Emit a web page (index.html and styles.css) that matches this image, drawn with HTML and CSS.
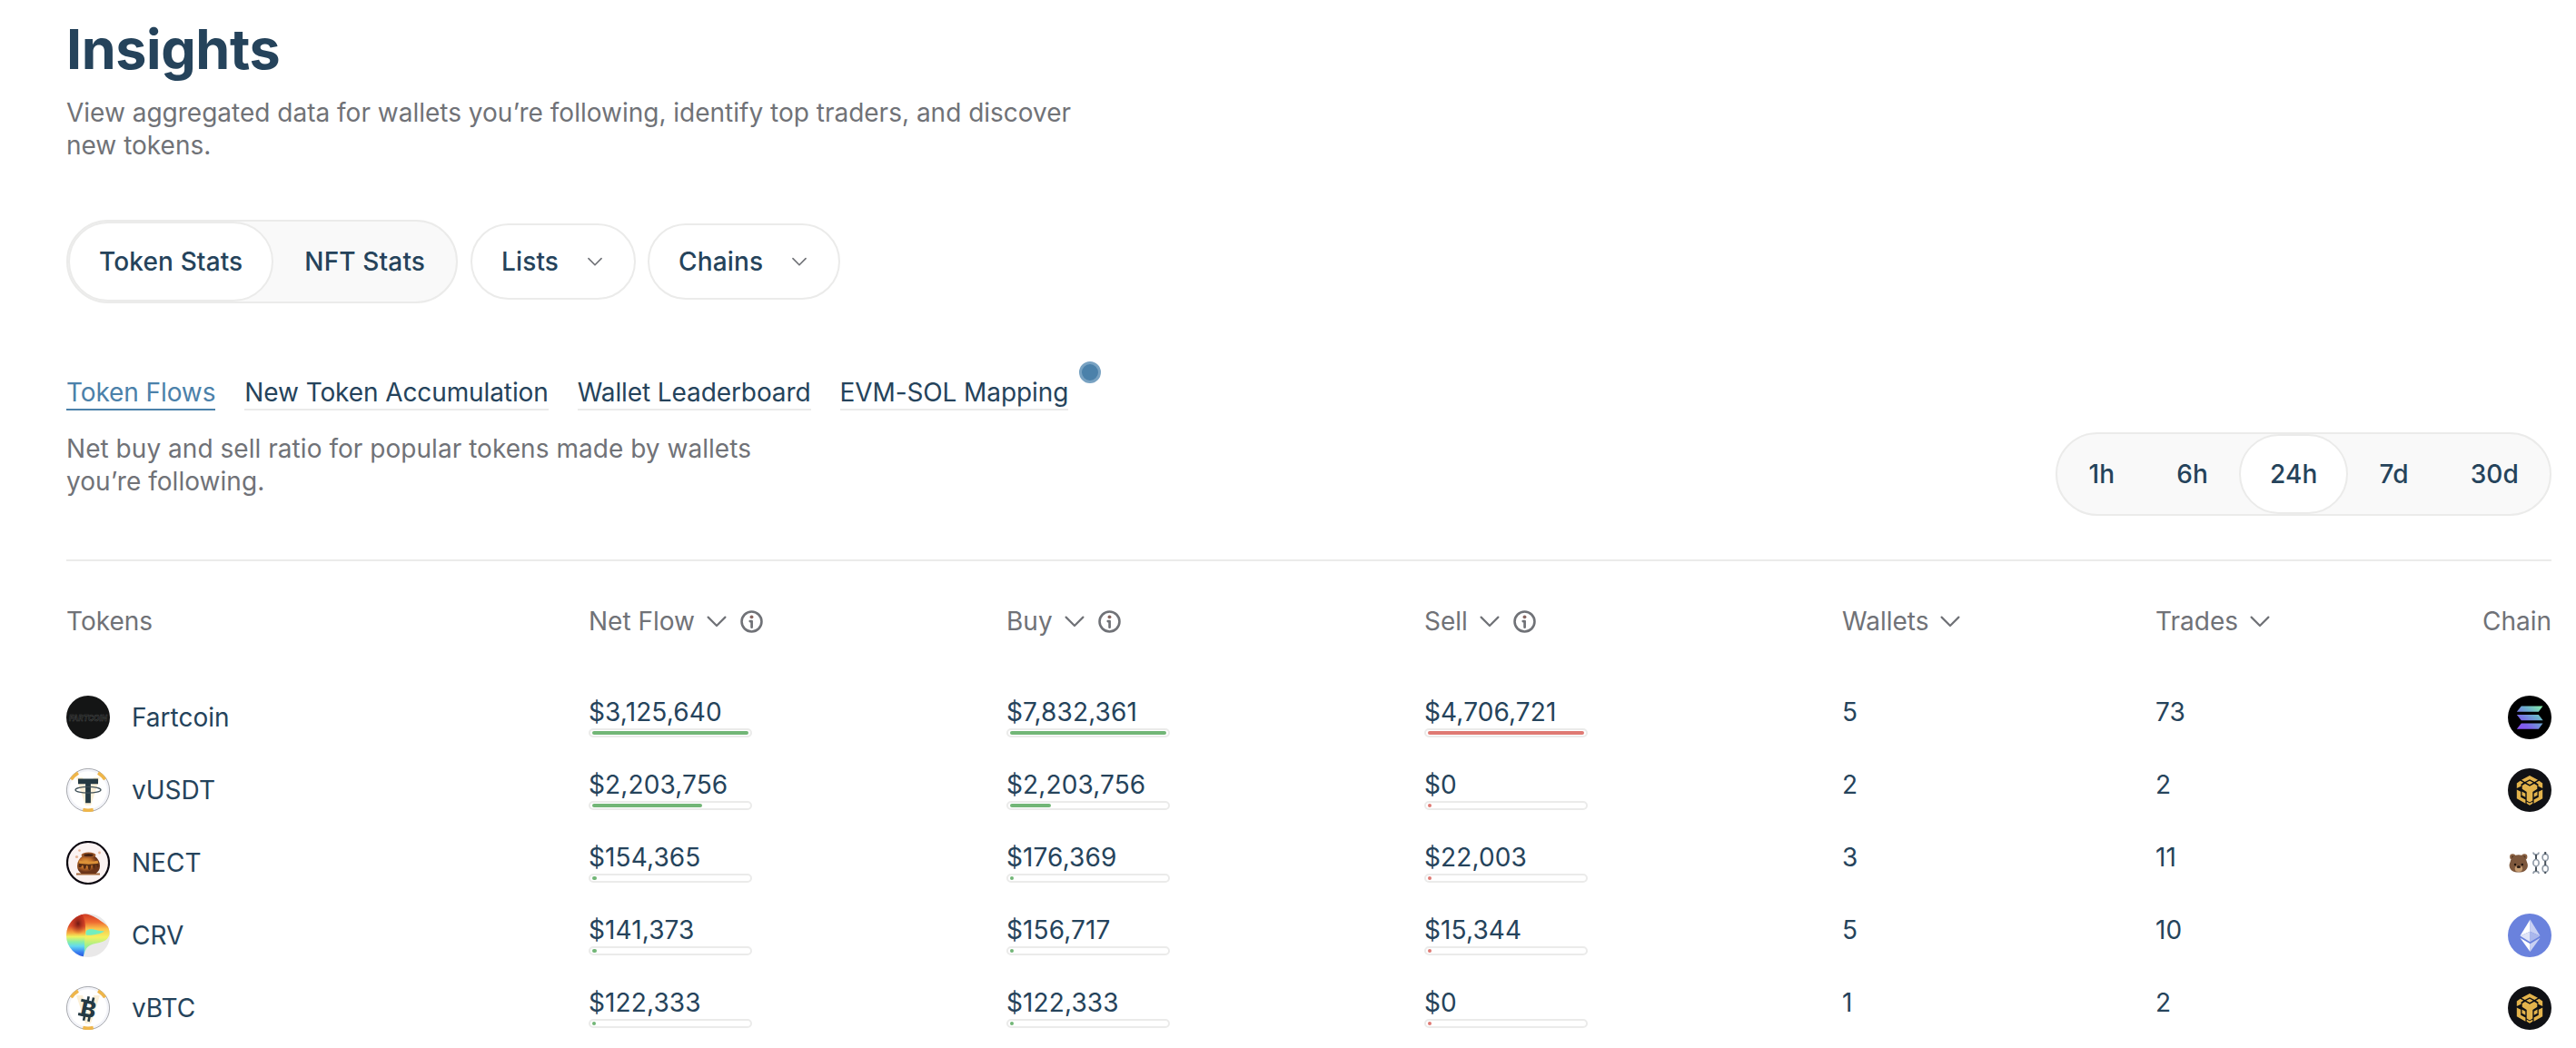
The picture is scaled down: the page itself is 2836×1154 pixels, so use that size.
FILE: index.html
```html
<!DOCTYPE html>
<html lang="en">
<head>
<meta charset="utf-8">
<title>Insights</title>
<link rel="stylesheet" href="styles.css">
</head>
<body>
<svg class="sprite" aria-hidden="true">
  <defs>
    <linearGradient id="sol-g" gradientUnits="userSpaceOnUse" x1="12" y1="38" x2="37" y2="9">
      <stop offset="0" stop-color="#8b4df5"/><stop offset=".25" stop-color="#7c62ea"/><stop offset=".62" stop-color="#6cb0cd"/><stop offset="1" stop-color="#8cf5a4"/>
    </linearGradient>
    <linearGradient id="crv-a" x1="0" y1="0" x2="0" y2="1">
      <stop offset="0" stop-color="#c8301f"/><stop offset=".28" stop-color="#dd4a2a"/><stop offset=".44" stop-color="#f8a83e"/><stop offset=".53" stop-color="#eef25e"/><stop offset=".65" stop-color="#86eea8"/><stop offset=".75" stop-color="#62d8f2"/><stop offset=".88" stop-color="#3b82f0"/><stop offset="1" stop-color="#2450dc"/>
    </linearGradient>
    <linearGradient id="crv-b" x1="0" y1="0" x2="0" y2="1">
      <stop offset="0" stop-color="#cf3a24"/><stop offset=".2" stop-color="#ef6a31"/><stop offset=".36" stop-color="#fbc64c"/><stop offset=".55" stop-color="#f4f260"/><stop offset=".74" stop-color="#a5f088"/><stop offset=".9" stop-color="#6fe6e0"/>
    </linearGradient>
    <radialGradient id="crv-d"><stop offset="0" stop-color="#6e1a14"/><stop offset="1" stop-color="#b82c1e" stop-opacity="0"/></radialGradient>
    <radialGradient id="pot-g" cx=".38" cy=".4"><stop offset="0" stop-color="#eba944"/><stop offset=".6" stop-color="#bf6c28"/><stop offset="1" stop-color="#6b3419"/></radialGradient>
    <clipPath id="round"><circle cx="24" cy="24" r="24"/></clipPath>
  </defs>
  <symbol id="chevron" viewBox="0 0 24 24"><path d="M2.6 7.6 12 17l9.400-9.400" fill="none" stroke="currentColor" stroke-width="2.200" stroke-linecap="round" stroke-linejoin="round"/></symbol>
  <symbol id="info" viewBox="0 0 26 26"><circle cx="13" cy="13" r="11.400" fill="none" stroke="currentColor" stroke-width="2.700"/><circle cx="13" cy="7.600" r="2" fill="#87655f"/><path d="M11.200 12.600h1.900v6.800" fill="none" stroke="currentColor" stroke-width="2.800" stroke-linejoin="round" stroke-linecap="round"/></symbol>
  <symbol id="vring" viewBox="0 0 48 48">
    <circle cx="24" cy="24" r="23.600" fill="#f2f3f8" stroke="#92949b" stroke-width=".8"/>
    <circle cx="24" cy="24" r="20.800" fill="#fff"/>
    <path d="M5.400 12.400A22 22 0 0 1 13 5.100M35 5.100a22 22 0 0 1 7.600 7.300M18.300 45.500a22 22 0 0 0 11.400 0" fill="none" stroke="#efb64a" stroke-width="3.600"/>
    <path d="M11 10h7l6 20 6-20h7L27 41h-6z" fill="#fbf0d8"/>
  </symbol>
  <symbol id="vusdt" viewBox="0 0 48 48"><use href="#vring"/>
    <path d="M13 11.500h22v5.800h-8.100v21h-5.800v-21H13z" fill="#253a43"/>
    <ellipse cx="24" cy="23.700" rx="14" ry="3.400" fill="none" stroke="#405158" stroke-width="1.300"/>
  </symbol>
  <symbol id="nect" viewBox="0 0 48 48">
    <circle cx="24" cy="24" r="23" fill="#fbf3f2" stroke="#0b0710" stroke-width="2.200"/>
    <path d="M11 35.500h26v2H11z" fill="#a3683c"/>
    <path d="M18 16.500c-4 3-6 6.500-6 11 0 3.800 2 6.500 4.500 8.500h16c2.600-2 4.500-4.700 4.500-8.500 0-4.500-2-8-6-11z" fill="url(#pot-g)"/>
    <path d="M13.500 23c3 1.500 18 1.500 21.500 0l.8 5c-.8 1.400-1.800 1.300-2-.6-.3-1.600-1.600-1.500-1.800.2-.3 4-2.600 4-2.800.4-.2-2-1.800-2-2-.2-.4 5.500-3.200 5.500-3.400.8-.2-2.200-1.800-2.200-2-.4-.3 3.500-2.800 3.300-2.900.2-.2-2.200-1.600-2.200-2-.6-.5 1.600-2.400 1.600-3.400.6z" fill="#542b14"/>
    <path d="M14.500 21.500c3 1.600 16 1.600 20 0l1 3c-4 1.500-18 1.500-22 0z" fill="#dc9137"/>
    <ellipse cx="24.500" cy="15.600" rx="8" ry="3" fill="#9b572a"/><ellipse cx="24.500" cy="15.400" rx="5.200" ry="1.500" fill="#432010"/>
    <g fill="#e7b394"><circle cx="14.500" cy="10.500" r="1.300"/><circle cx="11.500" cy="17.500" r="1.600"/><circle cx="36.500" cy="13" r="1.400"/></g>
  </symbol>
  <symbol id="crv" viewBox="0 0 48 48"><g clip-path="url(#round)">
    <path d="M0 0h48v48H0z" fill="#e9e8e8"/>
    <path d="M16 0c9-.5 18 5 24 9.500 4 2.600 8 6 8 10s-2 8-5 10c-5 3-13 3-17 5.500-4 2-6 7-7 12L14 20z" fill="url(#crv-b)"/>
    <path d="M21.500 20c2-3.500 6-3.500 11-2 4 1.200 7 1.300 9.500 1.500-3 2.300-9 3.500-13 4-3 .3-6 .7-7.500-.5z" fill="#74eebd"/>
    <path d="M0 0h17c3 5 4.500 12 4 21-.6 6-1 10-1 15s-.7 9-1.500 12H0z" fill="url(#crv-a)"/>
    <ellipse cx="13" cy="11" rx="9" ry="12" fill="url(#crv-d)"/>
  </g></symbol>
  <symbol id="solana" viewBox="0 0 48 48"><circle cx="24" cy="24" r="24" fill="#000"/><path d="M14.800 11.500H38.500l-4.700 6.300H9.800zM9.800 21h24l4.900 6.200H14.800zM14.800 30.600H38.500l-4.700 6.200H9.800z" fill="url(#sol-g)"/></symbol>
  <symbol id="bnb" viewBox="0 0 48 48"><circle cx="24" cy="24" r="24" fill="#101115"/>
    <path d="M24 8l9 4.800-3.700 2.200L24 12.200 18.700 15 15 12.800zM24 13.700l3.800 2-3.800 2.200-3.800-2.200zM13.600 13.700l3.600 2.100-2.700 1.700v2.300L9.800 22v-5.600zM34.400 13.700l-3.600 2.100 2.700 1.700v2.300l4.700 2.200v-5.600zM19 17l5 2.800 5-2.800 3.300 2v3.800L27.300 26v9.600L24 37.400l-3.300-1.800V26l-5-3.200V19zM9.800 23.400l4.400 2.300v6l5.200 2.800v4.200l-9.600-5.500zM38.200 23.400l-4.400 2.300v6l-5.200 2.800v4.200l9.600-5.500zM15.500 25.600l3.800 2.200v4l-3.800-2.100zM32.500 25.600l-3.800 2.200v4l3.800-2.100zM20.700 36.800l3.300 1.800 3.300-1.800v2L24 40.700l-3.300-1.900z" fill="#e3b34c"/>
  </symbol>
  <symbol id="eth" viewBox="0 0 48 48"><circle cx="24" cy="24" r="24" fill="#6a82dd"/>
    <path d="M24.500 6.500v13.200l-11 4.900z" fill="#fff"/><path d="M24.500 6.500v13.200l11 4.900z" fill="#c9d1f3"/>
    <path d="M24.500 19.700v11.500l-11-6.600z" fill="#dfe4f8"/><path d="M24.500 19.700v11.500l11-6.600z" fill="#aab7ec"/>
    <path d="M24.500 33.300v8.600l-11-15.200z" fill="#fff"/><path d="M24.500 33.300v8.600l11-15.200z" fill="#c9d1f3"/>
  </symbol>
  <symbol id="bera" viewBox="0 0 48 48">
    <circle cx="5.300" cy="17.500" r="3.200" fill="#8b6142"/><circle cx="18.200" cy="17.500" r="3.200" fill="#8b6142"/>
    <circle cx="5.500" cy="17.700" r="1.500" fill="#4f3625"/><circle cx="18" cy="17.700" r="1.500" fill="#4f3625"/>
    <path d="M11.800 15.200c5 0 8 3.500 9 7.500.8 2.300 1.300 3.300 1 5.300-.6 4.300-4.500 6.600-10 6.600s-9.600-2.300-10.100-6.600c-.3-2 .2-3 1-5.300 1-4 4-7.500 9.100-7.500z" fill="#7d573c"/>
    <ellipse cx="11.900" cy="30.500" rx="4.200" ry="3.600" fill="#c79d72"/><ellipse cx="11.900" cy="28.600" rx="2.300" ry="1.500" fill="#2a1b15"/>
    <circle cx="8" cy="26" r="1.200" fill="#21150f"/><circle cx="15.800" cy="26" r="1.200" fill="#21150f"/>
    <g fill="none" stroke="#929ca8" stroke-width="1.700"><path d="M28 12.500c0 3.500 6 3.500 6 0M28 36c0-3.500 6-3.500 6 0"/><ellipse cx="31" cy="24.200" rx="3.100" ry="3.700"/><ellipse cx="41.200" cy="18" rx="3.100" ry="3.700"/><ellipse cx="41.200" cy="30.500" rx="3.100" ry="3.700"/></g>
    <path d="M31 15v5M31 28.500v5M41.200 12v3M41.200 22v5M41.200 34v2" stroke="#48525b" stroke-width="2"/>
  </symbol>
</svg>

<main class="page">
  <h1 class="title">Insights</h1>
  <p class="intro">View aggregated data for wallets you’re following, identify top traders, and discover new tokens.</p>

  <div class="filters">
    <div class="segmented">
      <button class="segment active">Token Stats</button><button class="segment">NFT Stats</button>
    </div>
    <button class="dropdown">Lists<svg class="drop-icon"><use href="#chevron"/></svg></button>
    <button class="dropdown">Chains<svg class="drop-icon"><use href="#chevron"/></svg></button>
  </div>

  <div class="panel-head">
    <div>
      <nav class="tabs">
        <a class="tab current">Token Flows</a>
        <a class="tab">New Token Accumulation</a>
        <a class="tab">Wallet Leaderboard</a>
        <a class="tab">EVM-SOL Mapping<span class="dot"></span></a>
      </nav>
      <p class="note">Net buy and sell ratio for popular tokens made by wallets you’re following.</p>
    </div>
    <div class="segmented">
      <button class="segment">1h</button><button class="segment">6h</button><button class="segment active">24h</button><button class="segment">7d</button><button class="segment">30d</button>
    </div>
  </div>

  <section class="table">
    <div class="row head">
      <div>Tokens</div>
      <div class="sort">Net Flow<svg class="sort-icon"><use href="#chevron"/></svg><svg class="info"><use href="#info"/></svg></div>
      <div class="sort">Buy<svg class="sort-icon"><use href="#chevron"/></svg><svg class="info"><use href="#info"/></svg></div>
      <div class="sort">Sell<svg class="sort-icon"><use href="#chevron"/></svg><svg class="info"><use href="#info"/></svg></div>
      <div class="sort">Wallets<svg class="sort-icon"><use href="#chevron"/></svg></div>
      <div class="sort">Trades<svg class="sort-icon"><use href="#chevron"/></svg></div>
      <div class="chain">Chain</div>
    </div>
    <div class="row">
      <div class="token"><svg class="coin" viewBox="0 0 48 48"><circle cx="24" cy="24" r="24" fill="#141515"/><text class="fart-word" x="3" y="28" textLength="42" lengthAdjust="spacingAndGlyphs">FARTCOIN</text></svg>Fartcoin</div>
      <div class="value">$3,125,640<div class="meter"><div class="fill" style="width:100%"></div></div></div>
      <div class="value">$7,832,361<div class="meter"><div class="fill" style="width:100%"></div></div></div>
      <div class="value">$4,706,721<div class="meter"><div class="fill sell" style="width:100%"></div></div></div>
      <div>5</div><div>73</div>
      <div class="chain"><svg class="coin"><use href="#solana"/></svg></div>
    </div>
    <div class="row">
      <div class="token"><svg class="coin"><use href="#vusdt"/></svg>vUSDT</div>
      <div class="value">$2,203,756<div class="meter"><div class="fill" style="width:70.5%"></div></div></div>
      <div class="value">$2,203,756<div class="meter"><div class="fill" style="width:26%"></div></div></div>
      <div class="value">$0<div class="meter"><div class="fill sell" style="width:0"></div></div></div>
      <div>2</div><div>2</div>
      <div class="chain"><svg class="coin"><use href="#bnb"/></svg></div>
    </div>
    <div class="row">
      <div class="token"><svg class="coin"><use href="#nect"/></svg>NECT</div>
      <div class="value">$154,365<div class="meter"><div class="fill" style="width:3%"></div></div></div>
      <div class="value">$176,369<div class="meter"><div class="fill" style="width:2%"></div></div></div>
      <div class="value">$22,003<div class="meter"><div class="fill sell" style="width:0"></div></div></div>
      <div>3</div><div>11</div>
      <div class="chain"><svg class="coin"><use href="#bera"/></svg></div>
    </div>
    <div class="row">
      <div class="token"><svg class="coin"><use href="#crv"/></svg>CRV</div>
      <div class="value">$141,373<div class="meter"><div class="fill" style="width:3%"></div></div></div>
      <div class="value">$156,717<div class="meter"><div class="fill" style="width:2%"></div></div></div>
      <div class="value">$15,344<div class="meter"><div class="fill sell" style="width:0"></div></div></div>
      <div>5</div><div>10</div>
      <div class="chain"><svg class="coin"><use href="#eth"/></svg></div>
    </div>
    <div class="row">
      <div class="token"><svg class="coin" viewBox="0 0 48 48"><use href="#vring"/><g transform="rotate(12 24 25)" fill="#253a43"><text class="btc-b" x="24.500" y="34" text-anchor="middle">B</text><path d="M20.500 11.500h2.600v5h-2.600zM26 11.500h2.600v5H26zM20.500 33.500h2.600v5h-2.600zM26 33.500h2.600v5H26zM14.500 15.500h6v3h-6zM14.500 31.200h6v3h-6z"/></g></svg>vBTC</div>
      <div class="value">$122,333<div class="meter"><div class="fill" style="width:2%"></div></div></div>
      <div class="value">$122,333<div class="meter"><div class="fill" style="width:2%"></div></div></div>
      <div class="value">$0<div class="meter"><div class="fill sell" style="width:0"></div></div></div>
      <div>1</div><div>2</div>
      <div class="chain"><svg class="coin"><use href="#bnb"/></svg></div>
    </div>
  </section>
</main>
</body>
</html>
```
FILE: styles.css
```css
:root {
  --navy: #25435b;
  --gray: #707277;
  --blue: #4b81aa;
  --line: #ebebea;
}
* { box-sizing: border-box; }
body {
  margin: 0;
  background: #fff;
  color: var(--navy);
  font: 400 28px/36px Inter, sans-serif;
}
h1, p { margin: 0; }
.sprite { position: absolute; width: 0; height: 0; }
.fart-word { font: italic 700 9px Inter, sans-serif; fill: #141515; stroke: #484a4a; stroke-width: .5px; }
.btc-b { font: 800 25px Inter, sans-serif; }

.page { padding: 14px 27px 0 73px; }
.title { font-size: 61px; line-height: 80px; font-weight: 700; letter-spacing: -.4px; }
.intro { width: 1150px; margin-top: 12px; color: var(--gray); }

.filters { display: flex; align-items: center; margin-top: 64px; }
.segmented {
  display: flex;
  height: 92px;
  border: 2px solid var(--line);
  border-radius: 46px;
  background: #f9f9f9;
}
.segment, .dropdown {
  font: inherit;
  font-weight: 500;
  letter-spacing: .14px;
  color: inherit;
  white-space: nowrap;
}
.segment {
  padding: 0 32px;
  border: 2px solid transparent;
  border-radius: 44px;
  background: none;
}
.segment.active { background: #fff; border-color: var(--line); }
.dropdown {
  display: flex;
  align-items: center;
  height: 84px;
  margin-left: 14px;
  padding: 0 34px 0 32px;
  border: 2px solid var(--line);
  border-radius: 42px;
  background: #fff;
}
.dropdown + .dropdown { margin-left: 13px; }
.drop-icon { width: 18px; height: 18px; margin-left: 31px; color: var(--gray); }

.panel-head {
  display: flex;
  justify-content: space-between;
  align-items: flex-end;
  margin-top: 80px;
  padding-bottom: 48px;
  border-bottom: 2px solid var(--line);
}
.tabs { display: flex; gap: 32px; letter-spacing: -.1px; }
.tab { position: relative; border-bottom: 2px solid var(--line); }
.tab.current { color: var(--blue); border-color: var(--blue); }
.dot {
  position: absolute;
  right: -36px;
  top: -16px;
  width: 24px;
  height: 24px;
  border: 3px solid #78a2c2;
  border-radius: 50%;
  background: var(--blue);
}
.note { width: 800px; margin: 24px 0 20px; color: var(--gray); letter-spacing: .04px; }

.row {
  display: grid;
  grid-template-columns: 575px 460px 460px 460px 345px 1fr auto;
  height: 48px;
  margin-bottom: 32px;
}
.row.head { height: 36px; margin: 48px 0 64px; color: var(--gray); }
.sort { display: flex; align-items: center; }
.sort-icon { width: 24px; height: 24px; margin-left: 12px; }
.info { width: 25px; height: 25px; margin-left: 14px; }
.token { display: flex; align-items: center; gap: 24px; }
.value { letter-spacing: .12px; }
.coin { display: block; width: 48px; height: 48px; }
.meter {
  width: 180px;
  height: 10px;
  padding: 1px 2px;
  border: 2px solid var(--line);
  border-radius: 5px;
}
.fill { min-width: 4px; height: 4px; border-radius: 2px; background: #72b677; }
.fill.sell { background: #df7a74; }
```
